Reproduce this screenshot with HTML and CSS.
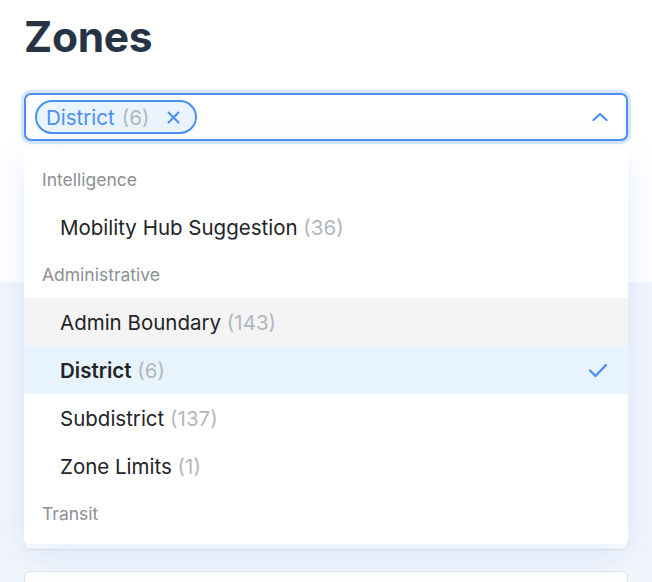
FILE: index.html
```html
<!DOCTYPE html>
<html lang="en">
<head>
<meta charset="utf-8">
<title>Zones</title>
<link rel="stylesheet" href="styles.css">
</head>
<body>
<main class="page">
  <h1 class="title">Zones</h1>
  <div class="select-wrap">
    <div class="select">
      <span class="chip">
        <span class="chip-label">District</span>
        <span class="count">(6)</span>
        <svg class="chip-x" width="13" height="13" viewBox="0 0 13 13"><path d="M1.5 1.5 L11.5 11.5 M11.5 1.5 L1.5 11.5" stroke="currentColor" stroke-width="2" stroke-linecap="round" fill="none"/></svg>
      </span>
      <svg class="chevron" width="16" height="10" viewBox="0 0 16 10"><path d="M1.5 8 L8 2 L14.5 8" stroke="currentColor" stroke-width="2.2" stroke-linecap="round" stroke-linejoin="round" fill="none"/></svg>
    </div>
    <div class="menu">
      <div class="group">Intelligence</div>
      <div class="option"><span>Mobility Hub Suggestion <span class="count">(36)</span></span></div>
      <div class="group">Administrative</div>
      <div class="option hover"><span>Admin Boundary <span class="count">(143)</span></span></div>
      <div class="option selected"><span><b>District</b> <span class="count">(6)</span></span>
        <svg class="check" width="20" height="16" viewBox="0 0 20 16"><path d="M2 8.5 L7.5 14 L18 3" stroke="currentColor" stroke-width="2.4" stroke-linecap="round" stroke-linejoin="round" fill="none"/></svg>
      </div>
      <div class="option"><span>Subdistrict <span class="count">(137)</span></span></div>
      <div class="option"><span>Zone Limits <span class="count">(1)</span></span></div>
      <div class="group">Transit</div>
    </div>
  </div>
  <section class="band">
    <div class="card card-tall"></div>
    <div class="card card-short"></div>
  </section>
</main>
</body>
</html>
```
FILE: styles.css
```css
* { box-sizing: border-box; }
html, body { margin: 0; padding: 0; background: #ffffff; }
body {
  font-family: Inter, "Noto Sans", "Liberation Sans", sans-serif;
  color: #222428;
  overflow: hidden;
  height: 582px;
}
.page { padding: 11px 24px 0; }
.title {
  margin: 0;
  font-size: 42.5px;
  line-height: 52px;
  font-weight: 700;
  color: #263345;
  letter-spacing: -0.3px;
}
.select-wrap { position: relative; margin-top: 30px; z-index: 2; }
.select {
  height: 48px;
  border: 2px solid #4a8ff1;
  border-radius: 7px;
  box-shadow: 0 0 0 3px #d6e6fc;
  background: #fff;
  display: flex;
  align-items: center;
  justify-content: space-between;
  padding: 0 18px 0 9px;
}
.chip {
  display: inline-flex;
  align-items: center;
  height: 34px;
  padding: 0 15px 0 9px;
  border: 2px solid #4a8ff1;
  border-radius: 17px;
  background: #e9f4fe;
  font-size: 20.5px;
  color: #4a8ff1;
}
.chip .count { margin-left: 7px; }
.chip-x { margin-left: 18px; color: #4a8ff1; }
.count { color: #b3b7bd; font-weight: 400; }
.chevron { color: #4a8ff1; }
.menu {
  position: absolute;
  top: calc(100% + 7px);
  left: 0;
  right: 0;
  height: 396px;
  overflow: hidden;
  background: #fff;
  border-radius: 4px;
  padding-top: 8px;
  box-shadow: 0 10px 36px rgba(44, 110, 230, 0.13);
}
.group {
  height: 47px;
  display: flex;
  align-items: center;
  padding-left: 18px;
  font-size: 17.5px;
  color: #8d8f93;
}
.option {
  height: 48px;
  display: flex;
  align-items: center;
  justify-content: space-between;
  padding: 0 20px 0 36px;
  font-size: 20.5px;
  color: #222428;
}
.option.hover { background: #f4f4f4; }
.option.selected { background: #e8f4fd; }
.option b { font-weight: 600; }
.check { color: #4a8ff1; }
.band {
  margin: 141px -24px 0;
  padding: 0 24px;
  background: #f2f6fc;
  height: 300px;
}
.card {
  background: #ffffff;
  border: 1px solid #dfe4eb;
  border-radius: 6px;
}
.card-tall { height: 268px; margin-bottom: 21px; }
.card-short { height: 11px; border-bottom: 0; border-radius: 6px 6px 0 0; }
```
